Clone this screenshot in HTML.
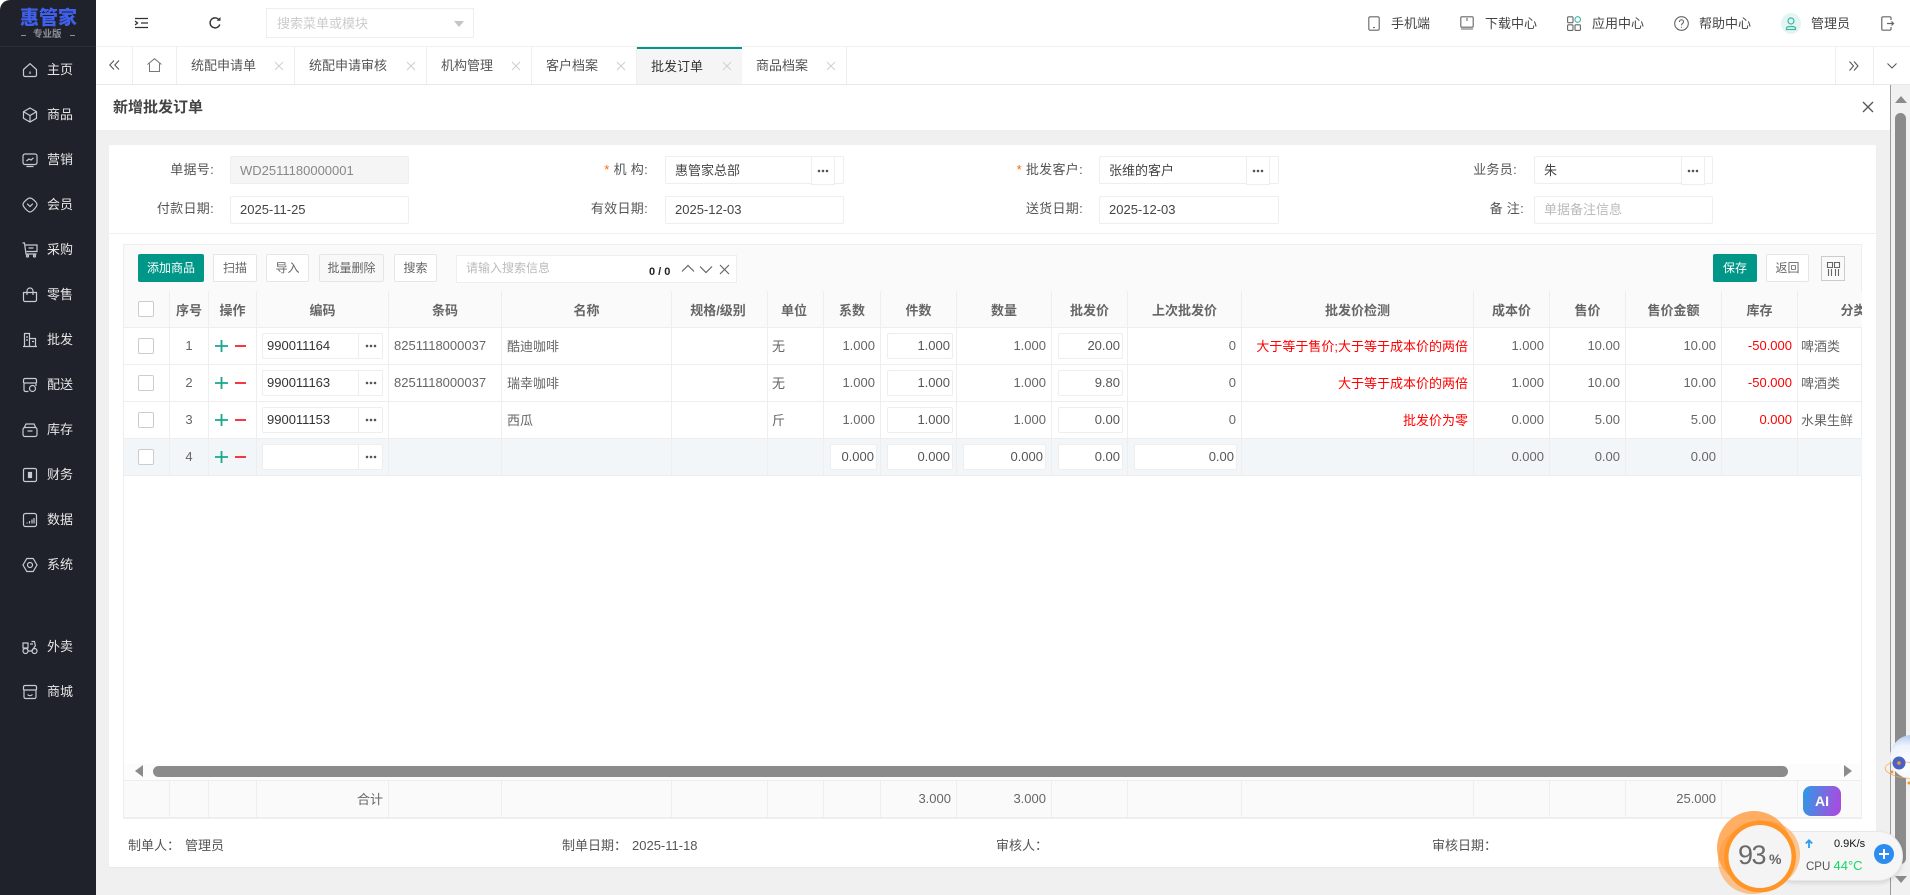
<!DOCTYPE html>
<html lang="zh-CN">
<head>
<meta charset="utf-8">
<title>新增批发订单</title>
<style>
html,body{margin:0;padding:0;background:#fff}
body{position:relative;width:1910px;height:895px;overflow:hidden;font-family:"Liberation Sans","Noto Sans CJK SC",sans-serif;font-size:13px;color:#555}
.a{position:absolute;white-space:nowrap}
svg{display:block;overflow:visible}
.side{left:0;top:0;width:96px;height:895px;background:#1f222a;border-top-left-radius:10px}
.mi{left:47px;width:45px;height:20px;line-height:20px;color:#e6e6e6;font-size:13px;margin-top:1px}
.mic{left:22px;width:16px;height:16px;fill:none;stroke:#c8cbd0;stroke-width:1.2}
.hl{height:20px;line-height:21px;top:13px;color:#444;font-size:13px}
.tab{top:47px;height:37px;line-height:38px;border-right:1px solid #eee;box-sizing:border-box;color:#555;font-size:13px}
.tab span{position:absolute;left:15px;top:0}
.tab svg{position:absolute;top:15px;right:11px;width:8px;height:8px;stroke:#cfcfcf;stroke-width:1;fill:none}
.lb{height:20px;line-height:20px;text-align:right;color:#555;font-size:13px}
.fi{height:28px;line-height:26px;box-sizing:border-box;border:1px solid #eee;border-radius:2px;background:#fff;padding-left:9px;color:#444;font-size:13px}
.fi.t{line-height:28px}
.eb{width:24px;height:29px;box-sizing:border-box;border:1px solid #eee;background:#fff;top:156px}
.dt{position:absolute;width:12px;height:4px;left:50%;top:50%;margin:-2px 0 0 -6px;background:radial-gradient(circle,#555 1.1px,transparent 1.5px) center/4px 4px repeat-x}
.btn{top:254px;height:28px;line-height:26px;box-sizing:border-box;border:1px solid #e6e6e6;border-radius:2px;background:#fff;text-align:center;font-size:12px;color:#666}
.pri{background:#009688;border-color:#009688;color:#fff}
.tw{left:123px;width:1738px;overflow:hidden;border-left:1px solid #eee}
table{border-collapse:separate;border-spacing:0;table-layout:fixed;width:1786px}
td,th{box-sizing:border-box;border-right:1px solid #eee;border-bottom:1px solid #eee;padding:0 5px 2px;font-size:13px;font-weight:normal;color:#666;overflow:hidden;white-space:nowrap;position:relative}
th{background:#fafafa;font-weight:bold;text-align:center;height:37px;color:#666;padding-bottom:0}
.c{text-align:center}.r{text-align:right}.red{color:#f00}
.u{padding-left:4px}.l{padding-left:3px}
tr.alt td{background:#f3f6f8}
.cb{display:block;width:16px;height:16px;box-sizing:border-box;border:1px solid #ccc;border-radius:2px;background:#fff;margin:0 auto}
td.cc{padding:0 1px 0 0}
td.in{padding:0}
.ip{position:absolute;top:5px;height:26px;line-height:24px;box-sizing:border-box;border:1px solid #eee;border-radius:2px;background:#fff;padding:0 2px;text-align:right;color:#555}
.cd{left:5px;width:121px;text-align:left;padding-left:4px;color:#333}
.cd i{position:absolute;right:23px;top:0;bottom:0;width:1px;background:#eee}
.cd b{position:absolute;right:0;top:0;bottom:0;width:23px}
.pm{position:absolute;top:50%;margin-top:-7px;left:3px;width:34px;height:14px}
.ftx{top:836px;height:20px;line-height:20px;color:#555;font-size:13px}
</style>
</head>
<body>

<!-- sidebar -->
<div class="a side"></div>
<div class="a" style="left:20px;top:4px;width:56px;height:26px;line-height:26px;font-size:19px;font-weight:900;color:#4060ec;font-family:'Noto Sans CJK SC',sans-serif">惠管家</div>
<div class="a" style="left:21px;top:34.500px;width:5px;height:1px;background:#8d9097"></div>
<div class="a" style="left:70px;top:34.500px;width:5px;height:1px;background:#8d9097"></div>
<div class="a" style="left:33px;top:28px;height:14px;line-height:14px;font-size:9.500px;color:#8d9097;font-weight:bold">专业版</div>
<div class="a" style="left:0;top:46px;width:96px;height:1px;background:#2a2d35"></div>

<svg class="a mic" style="top:62px" viewBox="0 0 16 16"><path d="M1.500 7.500 8 1.700l6.500 5.800V13a1.500 1.500 0 0 1-1.500 1.500H3A1.500 1.500 0 0 1 1.500 13zM8 9.500v2.500"/></svg>
<div class="a mi" style="top:59px">主页</div>
<svg class="a mic" style="top:107px" viewBox="0 0 16 16"><path d="M8 1 14.500 4.700v6.600L8 15 1.500 11.300V4.700zM2 5l6 3.500L14 5M8 8.500V15"/></svg>
<div class="a mi" style="top:104px">商品</div>
<svg class="a mic" style="top:152px" viewBox="0 0 16 16"><rect x="1" y="2" width="14" height="10.500" rx="2"/><path d="M4.500 14.500h7M4.500 9 7 7l2 1 2.500-2.200"/></svg>
<div class="a mi" style="top:149px">营销</div>
<svg class="a mic" style="top:197px" viewBox="0 0 16 16"><path d="M8 1c2 0 7 4.200 7 6.500S10 15 8 15 1 9.800 1 7.500 6 1 8 1zM5.200 6.700 8 9.500l2.800-2.800"/></svg>
<div class="a mi" style="top:194px">会员</div>
<svg class="a mic" style="top:242px" viewBox="0 0 16 16"><path d="M.5 1h2l1.500 11h10.500M3.500 3H15v6.500H4.500M6.500 6h5"/><circle cx="5.500" cy="14" r="1"/><circle cx="12.500" cy="14" r="1"/></svg>
<div class="a mi" style="top:239px">采购</div>
<svg class="a mic" style="top:287px" viewBox="0 0 16 16"><path d="M1.500 5.500h13V13a1.500 1.500 0 0 1-1.500 1.500H3A1.500 1.500 0 0 1 1.500 13zM5 8V4a3 3 0 0 1 6 0v4"/></svg>
<div class="a mi" style="top:284px">零售</div>
<svg class="a mic" style="top:332px" viewBox="0 0 16 16"><path d="M1 14.500h14M2.500 14.500V1.500h5v13M7.500 6.500h6v8M4 5h2M4 8h2M10 9.500h2"/></svg>
<div class="a mi" style="top:329px">批发</div>
<svg class="a mic" style="top:377px" viewBox="0 0 16 16"><path d="M1.500 6V3A1.500 1.500 0 0 1 3 1.500h10A1.500 1.500 0 0 1 14.500 3v3M1.500 6h13M2 6v7a1.500 1.500 0 0 0 1.500 1.500h3M14 6v3"/><circle cx="10.500" cy="11.500" r="3"/></svg>
<div class="a mi" style="top:374px">配送</div>
<svg class="a mic" style="top:422px" viewBox="0 0 16 16"><rect x="1" y="5.500" width="14" height="9" rx="2"/><path d="M2 6 4 2h8l2 4M5.500 9h5"/></svg>
<div class="a mi" style="top:419px">库存</div>
<svg class="a mic" style="top:467px" viewBox="0 0 16 16"><rect x="1.500" y="1.500" width="13" height="13" rx="1.500"/><rect x="6.500" y="5.500" width="3" height="5" fill="#c8cbd0"/></svg>
<div class="a mi" style="top:464px">财务</div>
<svg class="a mic" style="top:512px" viewBox="0 0 16 16"><rect x="1.500" y="1.500" width="13" height="13" rx="2"/><path d="M5 11.500v-1M7.500 11.500V9M10 11.500V7.500M12 11.500V6"/></svg>
<div class="a mi" style="top:509px">数据</div>
<svg class="a mic" style="top:557px" viewBox="0 0 16 16"><path d="M4.800 1.500h6.400L15 8l-3.800 6.500H4.800L1 8z"/><circle cx="8" cy="8" r="2.500"/></svg>
<div class="a mi" style="top:554px">系统</div>
<svg class="a mic" style="top:639px" viewBox="0 0 16 16"><circle cx="3.500" cy="12" r="2.500"/><circle cx="12.500" cy="12" r="2.500"/><path d="M1 4h5v5H1zM9.500 2.500h3l1 5M6 12h4l3-5M8 5h3"/></svg>
<div class="a mi" style="top:636px">外卖</div>
<svg class="a mic" style="top:684px" viewBox="0 0 16 16"><path d="M1.500 6V3A1.500 1.500 0 0 1 3 1.500h10A1.500 1.500 0 0 1 14.500 3v3M1.500 6h13M2 6v7a1.500 1.500 0 0 0 1.500 1.500h9A1.500 1.500 0 0 0 14 13V6M5.500 10.500c1.500 1.500 3.500 1.500 5 0"/></svg>
<div class="a mi" style="top:681px">商城</div>

<!-- header -->
<div class="a" style="left:96px;top:46px;width:1814px;height:1px;background:#f0f0f0"></div>
<svg class="a" style="left:135px;top:17px" width="13" height="12" viewBox="0 0 13 12" fill="none" stroke="#333" stroke-width="1.300"><path d="M0 1.500h13M6 6h7M0 10.500h13M0 4l2.500 2L0 8"/></svg>
<svg class="a" style="left:209px;top:17px" width="12" height="12" viewBox="0 0 12 12" fill="none" stroke="#333" stroke-width="1.400"><path d="M10.800 7.500A5 5 0 1 1 9.500 2.200"/><path d="M7.700 3.800H11.500V0z" fill="#333" stroke="none"/></svg>
<div class="a" style="left:266px;top:8px;width:208px;height:30px;box-sizing:border-box;border:1px solid #eee;line-height:29px;padding-left:10px;color:#ccc;font-size:13px">搜索菜单或模块</div>
<div class="a" style="left:454px;top:21px;width:0;height:0;border-left:5px solid transparent;border-right:5px solid transparent;border-top:6px solid #c4c4c4"></div>

<svg class="a" style="left:1368px;top:16px" width="12" height="15" viewBox="0 0 12 15" fill="none" stroke="#666" stroke-width="1.100"><rect x=".8" y=".8" width="10.400" height="13.400" rx="1.500"/><path d="M5 11.500h2"/></svg>
<div class="a hl" style="left:1391px">手机端</div>
<svg class="a" style="left:1460px;top:16px" width="14" height="14" viewBox="0 0 14 14" fill="none" stroke="#666" stroke-width="1.100"><rect x=".8" y=".8" width="12.400" height="10.400" rx="1"/><path d="M1 13h12M7 2v3" /></svg>
<div class="a hl" style="left:1485px">下载中心</div>
<svg class="a" style="left:1567px;top:16px" width="14" height="15" viewBox="0 0 14 15" fill="none" stroke="#666" stroke-width="1.100"><rect x=".6" y=".8" width="5.400" height="5.900" rx="1"/><rect x=".6" y="8.800" width="5.400" height="5.600" rx="1"/><rect x="8" y="8.800" width="5.400" height="5.600" rx="1"/><circle cx="10.700" cy="3.500" r="2.800" stroke="#3cb6a4"/></svg>
<div class="a hl" style="left:1592px">应用中心</div>
<svg class="a" style="left:1674px;top:16px" width="15" height="15" viewBox="0 0 15 15" fill="none" stroke="#666" stroke-width="1.100"><circle cx="7.500" cy="7.500" r="6.800"/><path d="M5.500 6c0-3 4-3 4 0 0 1.500-2 1.500-2 3.200M7.500 10.800v1"/></svg>
<div class="a hl" style="left:1699px">帮助中心</div>
<div class="a" style="left:1781px;top:13px;width:20px;height:21px;border-radius:50%;background:#e3f5f1"></div>
<svg class="a" style="left:1785px;top:17px" width="12" height="14" viewBox="0 0 12 14" fill="none" stroke="#3cb6a4" stroke-width="1.200"><circle cx="6" cy="4" r="3"/><path d="M1.500 11c0-2 9-2 9 0v1.500h-9z"/></svg>
<div class="a hl" style="left:1811px">管理员</div>
<svg class="a" style="left:1881px;top:16px" width="13" height="15" viewBox="0 0 13 15" fill="none" stroke="#666" stroke-width="1.200"><path d="M10 4V2a1.200 1.200 0 0 0-1.200-1.200H2A1.200 1.200 0 0 0 .8 2v11A1.200 1.200 0 0 0 2 14.200h6.800A1.200 1.200 0 0 0 10 13v-2M6 7.500h6.500M10.500 5.500l2 2-2 2"/></svg>

<!-- tabs -->
<div class="a" style="left:96px;top:84px;width:1814px;height:1px;background:#e8e8e8"></div>
<div class="a" style="left:96px;top:47px;width:37px;height:37px;box-sizing:border-box;border-right:1px solid #eee"></div>
<svg class="a" style="left:109px;top:60px" width="11" height="10" viewBox="0 0 11 10" fill="none" stroke="#555" stroke-width="1.100"><path d="M5 .5.800 5 5 9.500M10 .5 5.800 5 10 9.500"/></svg>
<div class="a" style="left:133px;top:47px;width:44px;height:37px;box-sizing:border-box;border-right:1px solid #eee"></div>
<svg class="a" style="left:147px;top:58px" width="15" height="14" viewBox="0 0 15 14" fill="none" stroke="#777" stroke-width="1"><path d="M.5 6.500 7.500.7l7 5.800M2.500 5.500v8h10v-8"/></svg>
<div class="a tab" style="left:177px;width:118px"><span style="left:14px">统配申请单</span><svg viewBox="0 0 8 8"><path d="M0 0l8 8M8 0 0 8"/></svg></div>
<div class="a tab" style="left:295px;width:132px"><span style="left:14px">统配申请审核</span><svg viewBox="0 0 8 8"><path d="M0 0l8 8M8 0 0 8"/></svg></div>
<div class="a tab" style="left:427px;width:105px"><span style="left:14px">机构管理</span><svg viewBox="0 0 8 8"><path d="M0 0l8 8M8 0 0 8"/></svg></div>
<div class="a tab" style="left:532px;width:105px"><span style="left:14px">客户档案</span><svg viewBox="0 0 8 8"><path d="M0 0l8 8M8 0 0 8"/></svg></div>
<div class="a tab" style="left:637px;width:105px;background:#f5f5f5;border-top:2px solid #009688;color:#333;line-height:36px;border-right:0"><span style="left:14px">批发订单</span><svg viewBox="0 0 8 8" style="top:13px"><path d="M0 0l8 8M8 0 0 8"/></svg></div>
<div class="a tab" style="left:742px;width:105px"><span style="left:14px">商品档案</span><svg viewBox="0 0 8 8"><path d="M0 0l8 8M8 0 0 8"/></svg></div>
<div class="a" style="left:1835px;top:47px;width:1px;height:37px;background:#eee"></div>
<div class="a" style="left:1873px;top:47px;width:1px;height:37px;background:#eee"></div>
<svg class="a" style="left:1849px;top:61px" width="10" height="10" viewBox="0 0 10 10" fill="none" stroke="#555" stroke-width="1.100"><path d="M.5.500 4.500 5 .5 9.500M5 .500 9 5 5 9.500"/></svg>
<svg class="a" style="left:1887px;top:73px;margin-top:-10px" width="10" height="6" viewBox="0 0 10 6" fill="none" stroke="#555" stroke-width="1"><path d="M.5.500 5 5 9.500.5"/></svg>

<!-- page body -->
<div class="a" style="left:96px;top:130px;width:1794px;height:765px;background:#f0f0f0"></div>
<div class="a" style="left:113px;top:97px;height:22px;line-height:22px;font-size:15px;font-weight:bold;color:#444">新增批发订单</div>
<svg class="a" style="left:1863px;top:102px" width="10" height="10" viewBox="0 0 10 10" fill="none" stroke="#555" stroke-width="1.300"><path d="M0 0l10 10M10 0 0 10"/></svg>

<!-- card -->
<div class="a" style="left:109px;top:145px;width:1767px;height:722px;background:#fff;border-radius:2px;box-shadow:0 1px 1px rgba(0,0,0,.04)"></div>
<div class="a" style="left:109px;top:233px;width:1767px;height:1px;background:#f0f0f0"></div>

<div class="a lb" style="left:140px;top:160px;width:74px;letter-spacing:.3px">单据号:</div>
<div class="a fi t" style="left:230px;top:156px;width:179px;background:#f5f5f5;color:#888">WD2511180000001</div>
<div class="a lb" style="left:140px;top:199px;width:74px;letter-spacing:.3px">付款日期:</div>
<div class="a fi" style="left:230px;top:196px;width:179px">2025-11-25</div>

<div class="a lb" style="left:570px;top:160px;width:78px;letter-spacing:.3px"><span style="color:#f60">*</span> 机 构:</div>
<div class="a fi t" style="left:665px;top:156px;width:179px">惠管家总部</div>
<div class="a eb" style="left:811px"><div class="dt"></div></div>
<div class="a lb" style="left:570px;top:199px;width:78px;letter-spacing:.3px">有效日期:</div>
<div class="a fi" style="left:665px;top:196px;width:179px">2025-12-03</div>

<div class="a lb" style="left:1000px;top:160px;width:83px;letter-spacing:.3px"><span style="color:#f60">*</span> 批发客户:</div>
<div class="a fi t" style="left:1099px;top:156px;width:180px">张维的客户</div>
<div class="a eb" style="left:1246px"><div class="dt"></div></div>
<div class="a lb" style="left:1000px;top:199px;width:83px;letter-spacing:.3px">送货日期:</div>
<div class="a fi" style="left:1099px;top:196px;width:180px">2025-12-03</div>

<div class="a lb" style="left:1440px;top:160px;width:77px;letter-spacing:.3px">业务员:</div>
<div class="a fi t" style="left:1534px;top:156px;width:179px">朱</div>
<div class="a eb" style="left:1681px"><div class="dt"></div></div>
<div class="a lb" style="left:1440px;top:199px;width:84px;letter-spacing:.3px">备 注:</div>
<div class="a fi" style="left:1534px;top:196px;width:179px;color:#bbb">单据备注信息</div>

<!-- table frame -->
<div class="a" style="left:123px;top:244px;width:1739px;height:575px;box-sizing:border-box;border:1px solid #eee;border-bottom:2px solid #eee"></div>
<div class="a" style="left:124px;top:245px;width:1737px;height:46px;background:#fafafa"></div>
<div class="a btn pri" style="left:138px;width:66px">添加商品</div>
<div class="a btn" style="left:213px;width:44px">扫描</div>
<div class="a btn" style="left:266px;width:43px">导入</div>
<div class="a btn" style="left:319px;width:65px;background:#f8f8f8">批量删除</div>
<div class="a btn" style="left:394px;width:43px">搜索</div>
<div class="a" style="left:456px;top:255px;width:281px;height:28px;box-sizing:border-box;border:1px solid #eee;background:#fff;line-height:24px;padding-left:9px;font-size:12px;color:#bbb">请输入搜索信息</div>
<div class="a" style="left:649px;top:265px;height:14px;line-height:14px;font-size:11px;color:#222;font-weight:bold">0 / 0</div>
<svg class="a" style="left:681px;top:264px" width="54" height="11" viewBox="0 0 54 11" fill="none" stroke="#666" stroke-width="1.200"><path d="M1 7.500 7 1.500l6 6M19 2.500l6 6 6-6M39 1l9 9M48 1l-9 9"/></svg>
<div class="a btn pri" style="left:1713px;width:44px">保存</div>
<div class="a btn" style="left:1766px;width:43px">返回</div>
<div class="a" style="left:1821px;top:256px;width:24px;height:25px;box-sizing:border-box;border:1px solid #ccc"></div>
<svg class="a" style="left:1827px;top:262px" width="13" height="14" viewBox="0 0 13 14" fill="none" stroke="#666" stroke-width="1.100"><path d="M.5.500h5v5h-5zM7.500.500h5v5h-5zM1.500 7v7M4.500 7v7M8.500 7v7M11.500 7v7"/></svg>

<div class="a tw" style="top:291px;height:185px">
<table>
<colgroup><col style="width:46px"><col style="width:39px"><col style="width:48px"><col style="width:132px"><col style="width:113px"><col style="width:170px"><col style="width:96px"><col style="width:56px"><col style="width:57px"><col style="width:76px"><col style="width:95px"><col style="width:76px"><col style="width:114px"><col style="width:232px"><col style="width:76px"><col style="width:76px"><col style="width:96px"><col style="width:76px"><col style="width:112px"></colgroup>
<tr><th style="padding:0 1px 0 0"><span class="cb"></span></th><th>序号</th><th>操作</th><th>编码</th><th>条码</th><th>名称</th><th style="padding:0 6px 0 3px">规格/级别</th><th style="padding:0 6px 0 3px">单位</th><th>系数</th><th>件数</th><th>数量</th><th>批发价</th><th>上次批发价</th><th>批发价检测</th><th>成本价</th><th>售价</th><th>售价金额</th><th>库存</th><th>分类</th></tr>
<tr style="height:37px"><td class="cc"><span class="cb"></span></td><td class="c">1</td><td class="in"><svg class="pm" viewBox="0 0 34 14"><path d="M3 7h13M9.500 1v12" stroke="#17a88b" stroke-width="1.800" fill="none"/><path d="M23 7h11" stroke="#f5222d" stroke-width="1.800" fill="none"/></svg></td><td class="in"><div class="ip cd">990011164<i></i><b><span class="dt"></span></b></div></td><td>8251118000037</td><td>酷迪咖啡</td><td></td><td class="u">无</td><td class="r">1.000</td><td class="in"><div class="ip" style="left:6px;width:66px">1.000</div></td><td class="r">1.000</td><td class="in"><div class="ip" style="left:6px;width:65px">20.00</div></td><td class="r">0</td><td class="r red">大于等于售价;大于等于成本价的两倍</td><td class="r">1.000</td><td class="r">10.00</td><td class="r">10.00</td><td class="r red">-50.000</td><td class="l">啤酒类</td></tr>
<tr style="height:37px"><td class="cc"><span class="cb"></span></td><td class="c">2</td><td class="in"><svg class="pm" viewBox="0 0 34 14"><path d="M3 7h13M9.500 1v12" stroke="#17a88b" stroke-width="1.800" fill="none"/><path d="M23 7h11" stroke="#f5222d" stroke-width="1.800" fill="none"/></svg></td><td class="in"><div class="ip cd">990011163<i></i><b><span class="dt"></span></b></div></td><td>8251118000037</td><td>瑞幸咖啡</td><td></td><td class="u">无</td><td class="r">1.000</td><td class="in"><div class="ip" style="left:6px;width:66px">1.000</div></td><td class="r">1.000</td><td class="in"><div class="ip" style="left:6px;width:65px">9.80</div></td><td class="r">0</td><td class="r red">大于等于成本价的两倍</td><td class="r">1.000</td><td class="r">10.00</td><td class="r">10.00</td><td class="r red">-50.000</td><td class="l">啤酒类</td></tr>
<tr style="height:37px"><td class="cc"><span class="cb"></span></td><td class="c">3</td><td class="in"><svg class="pm" viewBox="0 0 34 14"><path d="M3 7h13M9.500 1v12" stroke="#17a88b" stroke-width="1.800" fill="none"/><path d="M23 7h11" stroke="#f5222d" stroke-width="1.800" fill="none"/></svg></td><td class="in"><div class="ip cd">990011153<i></i><b><span class="dt"></span></b></div></td><td></td><td>西瓜</td><td></td><td class="u">斤</td><td class="r">1.000</td><td class="in"><div class="ip" style="left:6px;width:66px">1.000</div></td><td class="r">1.000</td><td class="in"><div class="ip" style="left:6px;width:65px">0.00</div></td><td class="r">0</td><td class="r red">批发价为零</td><td class="r">0.000</td><td class="r">5.00</td><td class="r">5.00</td><td class="r red">0.000</td><td class="l">水果生鲜</td></tr>
<tr class="alt" style="height:37px"><td class="cc"><span class="cb"></span></td><td class="c">4</td><td class="in"><svg class="pm" viewBox="0 0 34 14"><path d="M3 7h13M9.500 1v12" stroke="#17a88b" stroke-width="1.800" fill="none"/><path d="M23 7h11" stroke="#f5222d" stroke-width="1.800" fill="none"/></svg></td><td class="in"><div class="ip cd">&nbsp;<i></i><b><span class="dt"></span></b></div></td><td></td><td></td><td></td><td></td><td class="in"><div class="ip" style="left:6px;width:47px">0.000</div></td><td class="in"><div class="ip" style="left:6px;width:66px">0.000</div></td><td class="in"><div class="ip" style="left:6px;width:83px">0.000</div></td><td class="in"><div class="ip" style="left:6px;width:65px">0.00</div></td><td class="in"><div class="ip" style="left:6px;width:103px">0.00</div></td><td></td><td class="r">0.000</td><td class="r">0.00</td><td class="r">0.00</td><td></td><td></td></tr>
</table>
</div>

<!-- horizontal scrollbar -->
<div class="a" style="left:124px;top:764px;width:1737px;height:16px;background:#fcfcfc"></div>
<div class="a" style="left:153px;top:766px;width:1635px;height:11px;background:#8b8b8b;border-radius:6px"></div>
<div class="a" style="left:135px;top:765px;width:0;height:0;border-top:6.500px solid transparent;border-bottom:6.500px solid transparent;border-right:8px solid #8b8b8b"></div>
<div class="a" style="left:1844px;top:765px;width:0;height:0;border-top:6.500px solid transparent;border-bottom:6.500px solid transparent;border-left:8px solid #8b8b8b"></div>

<!-- totals -->
<div class="a tw" style="top:780px;height:37px;border-top:1px solid #eee;box-sizing:border-box">
<table>
<colgroup><col style="width:46px"><col style="width:39px"><col style="width:48px"><col style="width:132px"><col style="width:113px"><col style="width:170px"><col style="width:96px"><col style="width:56px"><col style="width:57px"><col style="width:76px"><col style="width:95px"><col style="width:76px"><col style="width:114px"><col style="width:232px"><col style="width:76px"><col style="width:76px"><col style="width:96px"><col style="width:76px"><col style="width:112px"></colgroup>
<tr style="height:36px;background:#fafafa"><td style="border-bottom:0"></td><td style="border-bottom:0"></td><td style="border-bottom:0"></td><td class="r" style="border-bottom:0">合计</td><td style="border-bottom:0"></td><td style="border-bottom:0"></td><td style="border-bottom:0"></td><td style="border-bottom:0"></td><td style="border-bottom:0"></td><td class="r" style="border-bottom:0">3.000</td><td class="r" style="border-bottom:0">3.000</td><td style="border-bottom:0"></td><td style="border-bottom:0"></td><td style="border-bottom:0"></td><td style="border-bottom:0"></td><td style="border-bottom:0"></td><td class="r" style="border-bottom:0">25.000</td><td style="border-bottom:0"></td><td style="border-bottom:0"></td></tr>
</table>
</div>
<div class="a" style="left:1803px;top:786px;width:38px;height:30px;border-radius:8px;background:linear-gradient(100deg,#2a9be6,#7a6be0 55%,#b045e0);color:#fff;font-weight:bold;font-size:14px;line-height:30px;text-align:center">AI</div>

<div class="a ftx" style="left:128px">制单人：</div>
<div class="a ftx" style="left:185px">管理员</div>
<div class="a ftx" style="left:562px">制单日期：</div>
<div class="a ftx" style="left:632px">2025-11-18</div>
<div class="a ftx" style="left:996px">审核人：</div>
<div class="a ftx" style="left:1432px">审核日期：</div>

<!-- main scrollbar -->
<div class="a" style="left:1890px;top:85px;width:20px;height:810px;background:#f1f1f1"></div>
<div class="a" style="left:1890px;top:85px;width:1px;height:810px;background:#9a9a9a"></div>
<div class="a" style="left:1895px;top:96px;width:0;height:0;border-left:6px solid transparent;border-right:6px solid transparent;border-bottom:7px solid #8b8b8b"></div>
<div class="a" style="left:1895px;top:113px;width:11px;height:751px;background:#8b8b8b;border-radius:6px"></div>
<div class="a" style="left:1895px;top:876px;width:0;height:0;border-left:6px solid transparent;border-right:6px solid transparent;border-top:7px solid #8b8b8b"></div>

<!-- floating planet -->
<svg class="a" style="left:1880px;top:730px" width="30" height="60" viewBox="0 0 30 60">
<defs><radialGradient id="pg" cx=".35" cy=".7" r=".85"><stop offset="0" stop-color="#fff"/><stop offset=".55" stop-color="#eef3fc"/><stop offset="1" stop-color="#8fb0ea"/></radialGradient></defs>
<circle cx="32" cy="27" r="22" fill="url(#pg)"/>
<ellipse cx="26" cy="40" rx="21" ry="8" fill="none" stroke="#f7a24d" stroke-width=".7" transform="rotate(6 26 40)"/>
<circle cx="19" cy="33" r="6.500" fill="#4b62c4"/>
<circle cx="19" cy="33" r="1.800" fill="#f59a23"/>
<circle cx="12" cy="42" r="1.500" fill="#f59a23"/>
<circle cx="29" cy="53" r="1.500" fill="#f59a23"/>
</svg>

<!-- speed widget -->
<div class="a" style="left:1770px;top:831px;width:133px;height:50px;box-sizing:border-box;background:#f6f6f6;border-radius:25px;border:1px solid #e8e8e8;box-shadow:0 2px 4px rgba(0,0,0,.12)"></div>
<svg class="a" style="left:1805px;top:839px" width="8" height="9" viewBox="0 0 8 9" fill="none" stroke="#2d9cf0" stroke-width="1.800"><path d="M4 9V1.500M.8 4.500 4 1.300l3.200 3.200"/></svg>
<div class="a" style="left:1834px;top:836px;height:16px;line-height:16px;font-size:11px;color:#111">0.9K/s</div>
<div class="a" style="left:1806px;top:858px;height:16px;line-height:16px;font-size:11.500px;color:#555">CPU <span style="color:#16d66b;font-size:13px">44°C</span></div>
<div class="a" style="left:1874px;top:844px;width:20px;height:20px;border-radius:50%;background:#2d8cf0"></div>
<svg class="a" style="left:1879px;top:849px" width="10" height="10" viewBox="0 0 10 10" stroke="#fff" stroke-width="2"><path d="M0 5h10M5 0v10"/></svg>

<!-- orange ball -->
<svg class="a" style="left:1715px;top:808px" width="90" height="87" viewBox="0 0 90 87">
<circle cx="52" cy="46" r="33" fill="#ff9a3c" opacity=".55"/>
<circle cx="37" cy="52" r="34" fill="#ff9a3c" opacity=".55"/>
<circle cx="39" cy="40" r="37" fill="#ff9a3c" opacity=".8"/>
<circle cx="45" cy="48.500" r="36" fill="#ff9526"/>
<circle cx="45" cy="48.500" r="31.500" fill="#f4f4f4"/>
</svg>
<div class="a" style="left:1738px;top:838px;height:34px;line-height:34px;font-size:27px;color:#6a6a6a;font-weight:normal;letter-spacing:-1.500px">93</div>
<div class="a" style="left:1769px;top:850px;height:18px;line-height:18px;font-size:14px;font-weight:bold;color:#666">%</div>

</body>
</html>
